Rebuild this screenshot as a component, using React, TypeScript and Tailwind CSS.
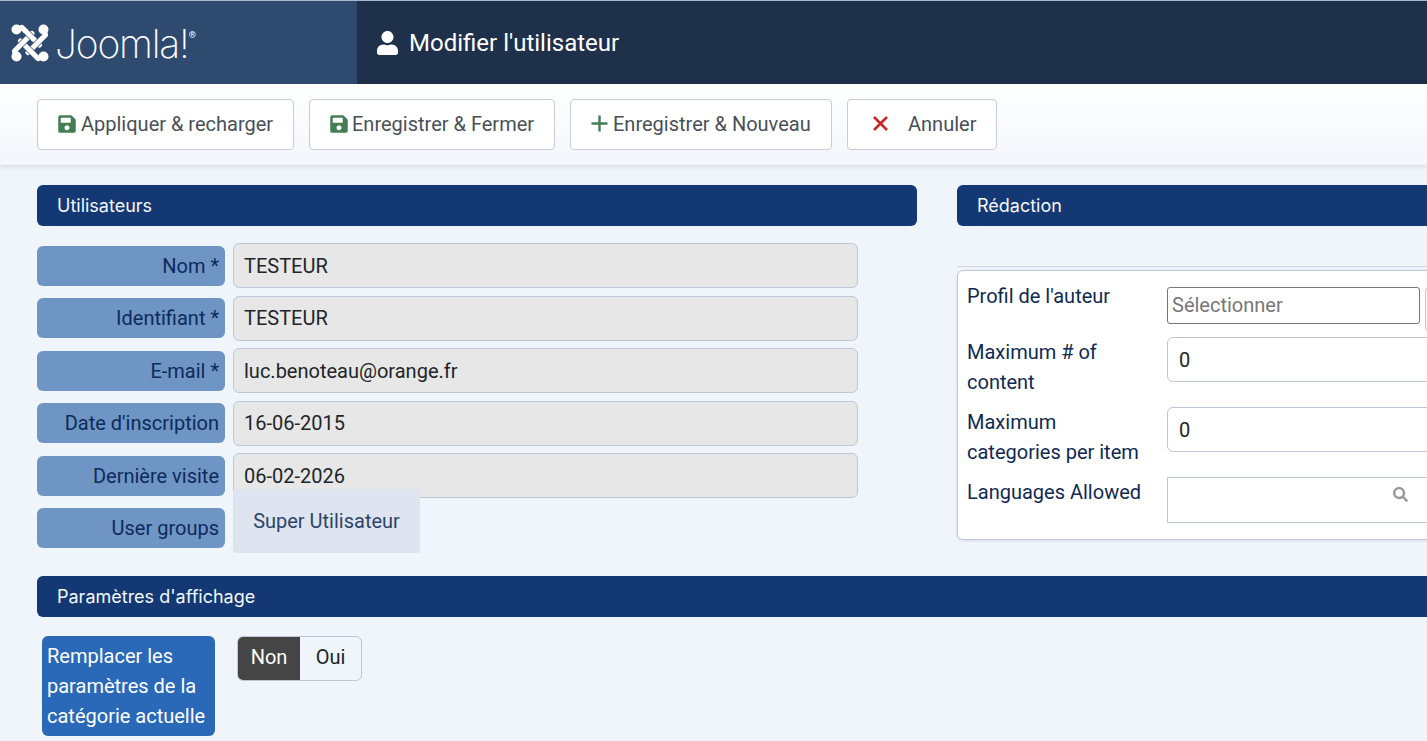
import { FaSave, FaUser, FaSearch } from "react-icons/fa";

const userRows = [
  { label: "Nom *", value: "TESTEUR" },
  { label: "Identifiant *", value: "TESTEUR" },
  { label: "E-mail *", value: "luc.benoteau@orange.fr" },
  { label: "Date d'inscription", value: "16-06-2015" },
  { label: "Dernière visite", value: "06-02-2026" },
];

function JoomlaMark() {
  const arm = "M5.5 5.5 L11 3.5 L28.5 21";
  return (
    <svg viewBox="0 0 38 38" className="w-[38px] h-[38px]">
      {[0, 90, 180, 270].map((deg) => (
        <g key={deg} transform={`rotate(${deg} 19 19)`} fill="none" strokeLinejoin="round">
          <path d={arm} stroke="#2e4a6f" strokeWidth="6.4" />
          <path d={arm} stroke="#fff" strokeWidth="5.2" strokeLinecap="round" />
          <circle cx="5.5" cy="5.5" r="5" fill="#fff" />
        </g>
      ))}
      {/* first arm again, so the last one passes under it */}
      <path d="M15 7.5 L22 14.5" stroke="#2e4a6f" strokeWidth="6.4" fill="none" />
      <path d="M14 6.5 L23 15.5" stroke="#fff" strokeWidth="5.2" fill="none" />
    </svg>
  );
}

function SectionBar({ title }: { title: string }) {
  return (
    <div className="h-[41px] bg-[#133873] rounded-md pl-5 flex items-center text-[#f5f8fc] text-[18px] font-['Inter',sans-serif]">
      {title}
    </div>
  );
}

function ToolButton({ icon, label, className }: { icon: React.ReactNode; label: string; className: string }) {
  return (
    <button className={`h-[51px] pb-[2px] bg-white border border-[#c8ccd4] rounded-[4px] flex items-center text-[20px] text-[#495057] ${className}`}>
      {icon}
      {label}
    </button>
  );
}

function EditorRow({ label, value }: { label: string; value: string }) {
  return (
    <div className="flex h-[70px]">
      <div className="w-[200px] pr-[20px] leading-[30px] text-[#0f2a52]">{label}</div>
      <div className="w-[400px] h-[45px] shrink-0 border border-[#bcc7d8] rounded-md bg-white pl-[11px] flex items-center text-[#212529]">
        {value}
      </div>
    </div>
  );
}

export default function App() {
  return (
    <div className="w-[1427px] h-[741px] overflow-hidden bg-[#f0f4fb] font-['Roboto',sans-serif] text-[20px]">
      <header className="h-[84px] flex bg-[#1f304a] border-t border-[#a9b8cc]">
        <div className="w-[357px] bg-[#2e4a6f] flex items-center pl-[11px] pt-[1px] text-white">
          <JoomlaMark />
          <span className="ml-[6px] text-[39px] leading-none font-['Inter',sans-serif] font-extralight tracking-[-1.2px]">Joomla!</span>
          <span className="text-[9px] self-start mt-[27px]">®</span>
        </div>
        <div className="flex items-center pl-5 text-white text-[24px]">
          <FaUser className="w-[21px] h-[24px] mr-[11px]" />
          Modifier l'utilisateur
        </div>
      </header>

      <div className="h-[81px] bg-gradient-to-b from-white to-[#f3f6fb] shadow-[0_1px_5px_rgba(40,60,100,0.18)] flex items-center pl-[37px] gap-[15px]">
        <ToolButton className="w-[257px] pl-[19px]" label="Appliquer & recharger" icon={<FaSave className="w-[20px] h-[20px] text-[#457d54] mr-[4px]" />} />
        <ToolButton className="w-[246px] pl-[19px]" label="Enregistrer & Fermer" icon={<FaSave className="w-[20px] h-[20px] text-[#457d54] mr-[3px]" />} />
        <ToolButton className="w-[262px] pl-5" label="Enregistrer & Nouveau" icon={
          <svg viewBox="0 0 17 17" className="w-[17px] h-[17px] mr-[5px]">
            <path d="M8.5 0.5 V16.5 M0.5 8.5 H16.5" stroke="#457d54" strokeWidth="2.4" fill="none" />
          </svg>
        } />
        <ToolButton className="w-[150px] pl-[25px]" label="Annuler" icon={
          <svg viewBox="0 0 15 15" className="w-[15px] h-[15px] mr-[20px]">
            <path d="M1 1 L14 14 M14 1 L1 14" stroke="#c52827" strokeWidth="2.6" fill="none" />
          </svg>
        } />
      </div>

      <main className="pl-[37px] pt-5 w-[1900px]">
        <div className="flex gap-10">
          <section className="w-[880px] shrink-0">
            <SectionBar title="Utilisateurs" />
            <div className="pt-[17px] flex flex-col gap-[7.5px]">
              {userRows.map((row) => (
                <div key={row.label} className="flex items-center gap-2 w-[821px]">
                  <div className="w-[188px] h-10 bg-[#6e95c4] rounded-md flex items-center justify-end pr-[6px] text-[#0f2a5c]">
                    {row.label}
                  </div>
                  <div className="flex-1 h-[45px] bg-[#e7e7e7] border border-[#bcc7d8] rounded-md pl-[10px] flex items-center text-[#212529]">
                    {row.value}
                  </div>
                </div>
              ))}
              <div className="flex items-start gap-2 h-10">
                <div className="w-[188px] h-10 mt-[2px] bg-[#6e95c4] rounded-md flex items-center justify-end pr-[6px] text-[#0f2a5c]">
                  User groups
                </div>
                <div className="relative -mt-[17px] w-[187px] h-16 bg-[#dee5f1] rounded-[3px] flex items-center justify-center text-[#2d4468]">
                  Super Utilisateur
                </div>
              </div>
            </div>
          </section>

          <section className="w-[880px] shrink-0">
            <SectionBar title="Rédaction" />
            <div className="mt-10 border-t border-[#cdd5e3]" />
            <div className="mt-[3px] h-[270px] bg-white border border-[#bcc7d8] rounded-md shadow-[0_1px_3px_rgba(40,60,100,0.12)] pl-[9px] flex flex-col">
              <div className="flex h-[66px] pt-[16px]">
                <div className="w-[200px] leading-[20px] text-[#0f2a52] -mt-[1px]">Profil de l'auteur</div>
                <div className="w-[253px] h-[37px] pb-[2px] shrink-0 border border-[#777] rounded-[3px] pl-1 flex items-center text-[#777]">
                  Sélectionner
                </div>
                <div className="ml-[5px] w-[40px] h-[44px] shrink-0 border border-[#bcc7d8] rounded-[4px]" />
              </div>
              <EditorRow label="Maximum # of content" value="0" />
              <EditorRow label="Maximum categories per item" value="0" />
              <div className="flex">
                <div className="w-[200px] leading-[30px] text-[#0f2a52]">Languages Allowed</div>
                <div className="w-[400px] h-[46px] shrink-0 border border-[#bcc7d8] bg-white pt-[9px] pl-[225px]">
                  <FaSearch className="w-[15px] h-[15px] text-[#999]" />
                </div>
              </div>
            </div>
          </section>
        </div>

        <section className="mt-[30px]">
          <SectionBar title="Paramètres d'affichage" />
          <div className="flex items-start pt-[19px] pl-[5px]">
            <div className="w-[173px] h-[100px] bg-[#2a69b8] rounded-md pl-[5px] py-[5px] leading-[30px] text-white">
              Remplacer les paramètres de la catégorie actuelle
            </div>
            <div className="ml-[22px] h-[45px] w-[125px] flex border border-[#bcc7d8] rounded-md overflow-hidden pb-[2px]">
              <div className="w-[62px] -mb-[2px] pb-[2px] bg-[#454545] text-white flex items-center justify-center">Non</div>
              <div className="flex-1 flex items-center justify-center text-[#212529]">Oui</div>
            </div>
          </div>
        </section>
      </main>
    </div>
  );
}
